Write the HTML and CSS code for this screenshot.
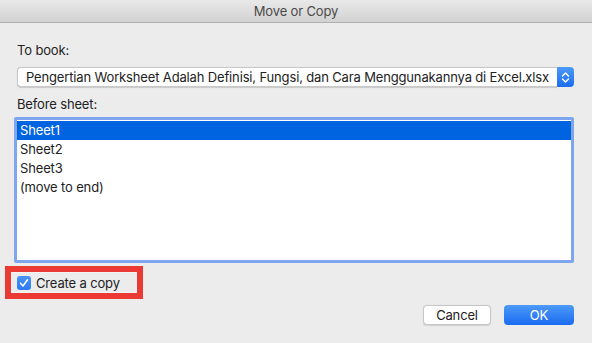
FILE: index.html
```html
<!DOCTYPE html>
<html lang="en">
<head>
    <meta charset="UTF-8">
    <title>Move or Copy</title>
    <link rel="stylesheet" href="styles.css">
</head>
<body>
    <div class="dialog">
        <div class="titlebar">Move or Copy</div>
        <div class="content">
            <div class="label first">To book:</div>
            <div class="select">
                <div class="select-value">Pengertian Worksheet Adalah Definisi, Fungsi, dan Cara Menggunakannya di Excel.xlsx</div>
                <div class="stepper">
                    <svg width="9" height="13" viewBox="0 0 9 13">
                        <path d="M1.5 5 L4.5 2 L7.5 5 M1.5 8 L4.5 11 L7.5 8" fill="none" stroke="#fff" stroke-width="1.4" stroke-linecap="round" stroke-linejoin="round"/>
                    </svg>
                </div>
            </div>
            <div class="label">Before sheet:</div>
            <div class="listbox">
                <div class="item selected">Sheet1</div>
                <div class="item">Sheet2</div>
                <div class="item">Sheet3</div>
                <div class="item">(move to end)</div>
            </div>
            <div class="highlight">
                <div class="checkbox">
                    <svg width="14" height="14" viewBox="0 0 14 14">
                        <path d="M3.5 7.2 L6 10 L10.5 3.8" fill="none" stroke="#fff" stroke-width="1.5" stroke-linecap="round" stroke-linejoin="round"/>
                    </svg>
                </div>
                <span>Create a copy</span>
            </div>
            <div class="actions">
                <button class="btn cancel">Cancel</button>
                <button class="btn ok">OK</button>
            </div>
        </div>
    </div>
</body>
</html>
```

FILE: styles.css
```css
body {
    margin: 0;
    background: #ececec;
    font-family: 'Inter', 'Noto Sans', sans-serif;
    font-size: 13px;
    letter-spacing: -0.15px;
    color: #222;
}

.dialog {
    width: 592px;
    height: 343px;
    overflow: hidden;
}

.titlebar {
    height: 22px;
    line-height: 22px;
    text-align: center;
    color: #4a4a4a;
    background: linear-gradient(#e9e9e9 0%, #d2d2d2 100%);
    border-bottom: 1px solid #b1b1b1;
}

.content {
    display: flex;
    flex-direction: column;
    padding: 0 18px 0 14px;
}

.label {
    line-height: 16px;
    margin: 9px 0 0 3px;
}

.label.first {
    margin-top: 19px;
}

.select {
    display: flex;
    height: 20px;
    margin: 9px 0 0 3px;
}

.select-value {
    flex: 1;
    background: #fff;
    border: 1px solid #c8c8c8;
    border-right: none;
    border-radius: 4px 0 0 4px;
    box-shadow: 0 0.5px 1px rgba(0, 0, 0, 0.15);
    line-height: 18px;
    padding-left: 8px;
    white-space: nowrap;
    overflow: hidden;
}

.stepper {
    width: 17px;
    display: flex;
    align-items: center;
    justify-content: center;
    background: linear-gradient(#4d9af8 0%, #1b6cf1 100%);
    border-radius: 0 4px 4px 0;
}

.listbox {
    margin-top: 5px;
    height: 139px;
    background: #fff;
    border: 3px solid #7ea6ee;
    border-radius: 2px;
    padding-top: 1px;
}

.item {
    height: 19px;
    line-height: 19px;
    padding-left: 3px;
}

.item.selected {
    background: #0063e0;
    color: #fff;
}

.highlight {
    display: flex;
    align-items: center;
    gap: 5px;
    width: 120px;
    height: 21px;
    margin: 3px 0 0 -9px;
    padding-left: 6px;
    border: 6px solid #eb3a34;
    box-shadow: inset 0 0 0 1px #f3f3f3;
}

.checkbox {
    width: 14px;
    height: 14px;
    border-radius: 3px;
    background: linear-gradient(#4b93f6 0%, #2c79f2 100%);
    display: flex;
}

.actions {
    display: flex;
    justify-content: flex-end;
    gap: 13px;
    margin-top: 6px;
}

.btn {
    height: 20px;
    border-radius: 4px;
    font-family: inherit;
    font-size: 13px;
    letter-spacing: inherit;
    padding: 0;
}

.cancel {
    width: 68px;
    background: #fff;
    color: #222;
    border: 1px solid #c6c6c6;
    box-shadow: 0 0.5px 1px rgba(0, 0, 0, 0.12);
}

.ok {
    width: 70px;
    border: none;
    color: #fff;
    background: linear-gradient(#4d9af8 0%, #1a6bf1 100%);
}
```
